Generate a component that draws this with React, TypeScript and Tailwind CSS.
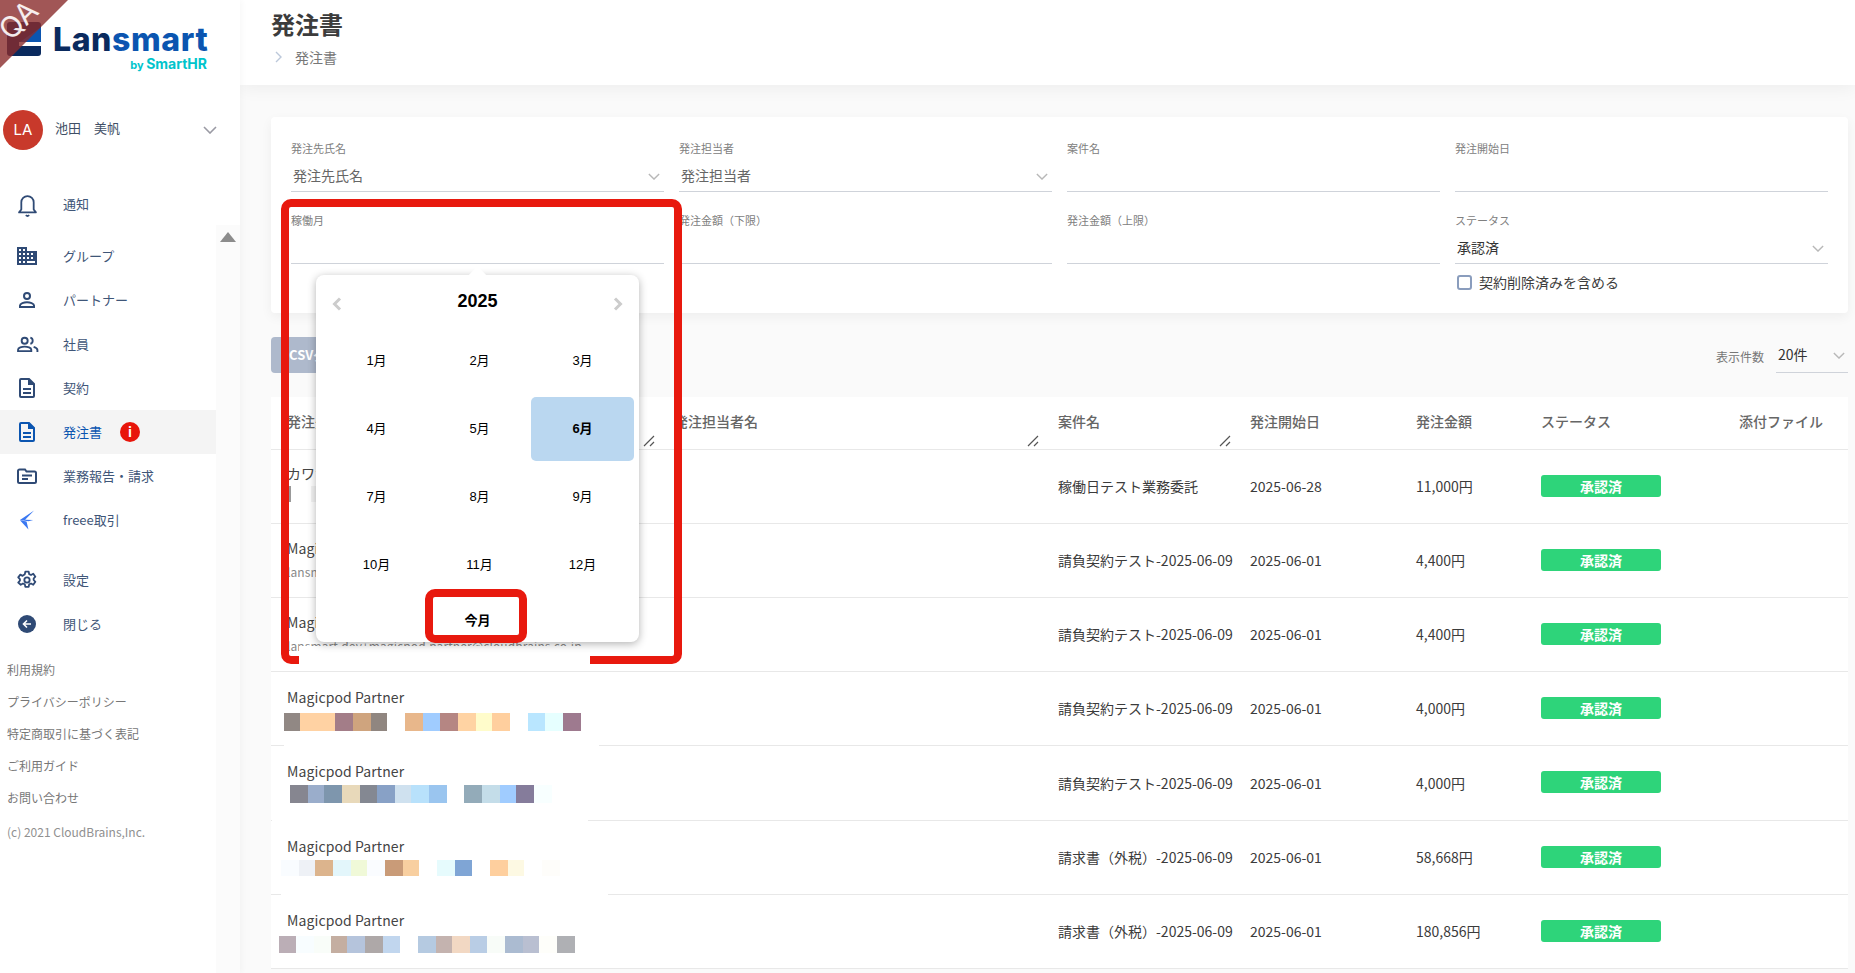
import React from "react";

const JP = "font-['Noto_Sans_CJK_JP','Noto_Sans',sans-serif]";

function Chevron({ className = "" }: { className?: string }) {
  return (
    <svg viewBox="0 0 14 8" className={className} fill="none" stroke="currentColor" strokeWidth="1.6">
      <path d="M1 1l6 6 6-6" />
    </svg>
  );
}

function Bell() {
  return (
    <svg viewBox="0 0 24 24" className="w-[27px] h-[27px]" fill="none" stroke="#2f4a75" strokeWidth="1.6">
      <path d="M6.500 16.500V10a5.500 5.500 0 0 1 11 0v6.500l2 2.500h-15z" strokeLinejoin="round" />
      <path d="M10.500 21.500c.8.800 2.200.800 3 0" />
    </svg>
  );
}
function Building() {
  return (
    <svg viewBox="0 0 20 18" className="w-[20px] h-[18px]" fill="#2f4a75">
      <path d="M0 0h10v4h10v14H0zM2 2v2h2V2zm4 0v2h2V2zM2 6v2h2V6zm4 0v2h2V6zm4 0v2h2V6zm4 0v2h2V6zM2 10v2h2v-2zm4 0v2h2v-2zm4 0v2h2v-2zm4 0v2h2v-2zM2 14v2h2v-2zm4 0v2h2v-2zm4 0v2h8v-2z" fillRule="evenodd" />
    </svg>
  );
}
function Person() {
  return (
    <svg viewBox="0 0 18 18" className="w-[18px] h-[18px]" fill="none" stroke="#2f4a75" strokeWidth="2">
      <circle cx="9" cy="5" r="3" />
      <path d="M2 16v-1.500c0-2 4-3.200 7-3.200s7 1.200 7 3.200V16z" />
    </svg>
  );
}
function People() {
  return (
    <svg viewBox="0 0 24 18" className="w-[23px] h-[17px]" fill="none" stroke="#2f4a75" strokeWidth="2">
      <circle cx="9" cy="5" r="3.200" />
      <path d="M2 16v-1.500c0-2 4-3.200 7-3.200s7 1.200 7 3.200V16z" />
      <path d="M15 1.800a3.300 3.300 0 0 1 0 6.400M18.500 11.500c2 .7 4 1.700 4 3.300V17" />
    </svg>
  );
}
function Doc({ color = "#2f4a75" }: { color?: string }) {
  return (
    <svg viewBox="0 0 16 20" className="w-[16px] h-[20px]" fill="none" stroke={color} strokeWidth="2">
      <path d="M1 2a1 1 0 0 1 1-1h8l5 5v12a1 1 0 0 1-1 1H2a1 1 0 0 1-1-1z" />
      <path d="M10 1v5h5" fill={color} />
      <path d="M4 11h8M4 15h8" />
    </svg>
  );
}
function Report() {
  return (
    <svg viewBox="0 0 20 16" className="w-[20px] h-[16px]" fill="none" stroke="#2f4a75" strokeWidth="2">
      <path d="M1 3a1.500 1.500 0 0 1 1.500-1.500H8l1.500 2h8A1.500 1.500 0 0 1 19 5v8.500A1.500 1.500 0 0 1 17.500 15h-15A1.500 1.500 0 0 1 1 13.500z" />
      <path d="M5 7.500h10M5 11h6" />
    </svg>
  );
}
function Freee() {
  return (
    <svg viewBox="0 0 18 20" className="w-[17px] h-[20px]" fill="#3a78f2">
      <path d="M16 0 1 10l9 1.200L15 10l-8.500-.2zM1 10.200l9 9.800-2-8.500z" />
    </svg>
  );
}
function Gear() {
  return (
    <svg viewBox="0 0 24 24" className="w-[20px] h-[20px]" fill="none" stroke="#2f4a75" strokeWidth="2.200" strokeLinejoin="round">
      <circle cx="12" cy="12" r="3.200" />
      <path d="M10 2h4l.6 3 2.200 1 2.700-1.500 2.500 3.500-2 2.200v1.800l2 2.200-2.500 3.500-2.700-1.500-2.200 1-.6 3h-4l-.6-3-2.200-1-2.700 1.500L1.500 15l2-2.200V11l-2-2.200L4 5.500 6.700 7l2.700-2z" />
    </svg>
  );
}
function Back() {
  return (
    <svg viewBox="0 0 18 18" className="w-[18px] h-[18px]">
      <circle cx="9" cy="9" r="9" fill="#2f4a75" />
      <path d="M9 5.500 5.500 9 9 12.500M5.500 9H13" fill="none" stroke="#fff" strokeWidth="1.600" />
    </svg>
  );
}

function NavItem({ icon, label, active, badge }: { icon: React.ReactNode; label: string; active?: boolean; badge?: boolean }) {
  return (
    <div className={`flex items-center h-[44px] w-[216px] ${active ? "bg-[#f4f4f4]" : ""}`}>
      <div className="w-[54px] flex justify-center shrink-0">{icon}</div>
      <span className={`ml-[9px] text-[13px] ${active ? "text-[#0b55b0]" : "text-[#3f5678]"}`}>{label}</span>
      {badge && (
        <span className="ml-[18px] w-[20px] h-[20px] rounded-full bg-[#e8150a] text-white text-[13px] font-bold flex items-center justify-center">i</span>
      )}
    </div>
  );
}

function Sidebar() {
  return (
    <aside className="relative w-[240px] shrink-0 bg-white shadow-[2px_0_6px_rgba(0,0,0,0.03)] z-10">
      <div className="h-[100px] relative">
        <svg viewBox="0 0 34 34" className="absolute left-[7px] top-[22px] w-[34px] h-[34px]">
          <rect width="34" height="34" rx="3" fill="#0a2a5e" />
          <path d="M34 5v15H13z" fill="#0b55b0" />
          <rect x="12" y="20" width="22" height="4" fill="#fff" />
        </svg>
        <div className="absolute left-[53px] top-[18px] text-[32px] font-extrabold leading-[44px] tracking-[0.6px] font-['Inter',sans-serif] text-[#0b55b0]">
          <span className="text-[#0a2a5e]">Lan</span>smart
        </div>
        <div className="absolute right-[33px] top-[55px] text-[13px] font-bold leading-[18px] font-['Inter',sans-serif] text-[#00c4cc]">
          <span className="text-[11px]">by </span><span className="text-[14px]">SmartHR</span>
        </div>
      </div>
      <div className="flex items-center h-[60px] pl-[3px] pr-[23px]">
        <div className="w-[40px] h-[40px] rounded-full bg-[#c8392b] text-white text-[15px] flex items-center justify-center font-['Inter',sans-serif]">LA</div>
        <span className="ml-[12px] mb-[4px] text-[13px] text-[#3f4f66] whitespace-pre">池田　美帆</span>
        <Chevron className="ml-auto w-[14px] h-[8px] text-[#9a9aa4]" />
      </div>
      <div className="mt-[22px]">
        <NavItem icon={<Bell />} label="通知" />
        <div className="h-[8px]" />
        <NavItem icon={<Building />} label="グループ" />
        <NavItem icon={<Person />} label="パートナー" />
        <NavItem icon={<People />} label="社員" />
        <NavItem icon={<Doc />} label="契約" />
        <NavItem icon={<Doc color="#0b55b0" />} label="発注書" active badge />
        <NavItem icon={<Report />} label="業務報告・請求" />
        <NavItem icon={<Freee />} label="freee取引" />
        <div className="h-[16px]" />
        <NavItem icon={<Gear />} label="設定" />
        <NavItem icon={<Back />} label="閉じる" />
      </div>
      <div className="pl-[7px] mt-[8px] text-[12px] text-[#777] leading-[32px]">
        <div>利用規約</div>
        <div>プライバシーポリシー</div>
        <div>特定商取引に基づく表記</div>
        <div>ご利用ガイド</div>
        <div>お問い合わせ</div>
        <div className="text-[#909090] mt-[2px]">(c) 2021 CloudBrains,Inc.</div>
      </div>
      {/* scrollbar strip */}
      <div className="absolute left-[216px] top-[225px] bottom-0 w-[24px] bg-[#fbfbfb]">
        <div className="mx-auto mt-[7px] w-0 h-0 border-x-[8px] border-x-transparent border-b-[10px] border-b-[#8c8c8c]" />
      </div>
      {/* QA ribbon */}
      <div className="absolute left-0 top-0 w-[68px] h-[68px] bg-[#8a2c2c]/80 [clip-path:polygon(0_0,100%_0,0_100%)] overflow-hidden">
        <span className="absolute left-[-2px] top-[4px] text-white/90 text-[29px] leading-[32px] -rotate-45 font-['Inter',sans-serif]">QA</span>
      </div>
    </aside>
  );
}

function Field({ label, value, placeholder, select }: { label: string; value?: string; placeholder?: boolean; select?: boolean }) {
  return (
    <div className="h-[51px] flex flex-col border-b border-[#cfd3da] relative">
      <div className="text-[11px] leading-[14px] text-[#808080]">{label}</div>
      <div className={`flex-1 flex items-center pl-[2px] pt-[5px] text-[14px] ${placeholder ? "text-[#666]" : "text-[#333]"}`}>{value}</div>
      {select && <Chevron className="absolute right-[4px] bottom-[11px] w-[12px] h-[7px] text-[#b8b8b8]" />}
    </div>
  );
}

function Filters() {
  return (
    <section className="ml-[31px] mr-[7px] mt-[32px] h-[196px] bg-white rounded-[4px] shadow-[0_4px_12px_rgba(0,0,0,0.05)] px-[20px] pt-[24px]">
      <div className="grid grid-cols-4 gap-x-[15px] gap-y-[21px]">
        <Field label="発注先氏名" value="発注先氏名" placeholder select />
        <Field label="発注担当者" value="発注担当者" placeholder select />
        <Field label="案件名" />
        <Field label="発注開始日" />
        <Field label="稼働月" />
        <Field label="発注金額（下限）" />
        <Field label="発注金額（上限）" />
        <div>
          <Field label="ステータス" value="承認済" select />
          <label className="mt-[9px] ml-[2px] flex items-center gap-[7px] text-[14px] leading-[18px] text-[#3d3d3d]">
            <span className="w-[15px] h-[15px] rounded-[3px] border-2 border-[#8a9dbd] bg-white" />
            契約削除済みを含める
          </label>
        </div>
      </div>
    </section>
  );
}

function Toolbar() {
  return (
    <div className="ml-[31px] mr-[7px] mt-[24px] h-[60px] flex items-start justify-between">
      <div className="h-[36px] w-[190px] rounded-[4px] bg-[#aeb9cc] text-white text-[13px] font-bold flex items-center pl-[18px] whitespace-nowrap">
        CSVダウンロード
      </div>
      <div className="flex items-start">
        <span className="mt-[12px] text-[12px] leading-[16px] text-[#777]">表示件数</span>
        <div className="ml-[12px] w-[72px] h-[36px] border-b border-[#cfd3da] relative text-[14px] leading-[34px] text-[#333] pl-[2px]">
          20件
          <Chevron className="absolute right-[3px] top-[15px] w-[12px] h-[7px] text-[#b8b8b8]" />
        </div>
      </div>
    </div>
  );
}

const COLS = "grid grid-cols-[387px_384px_192px_166px_125px_198px_125px]";

function Handle() {
  return (
    <svg viewBox="0 0 12 12" className="absolute right-[3px] bottom-[2px] w-[12px] h-[12px]" stroke="#555" strokeWidth="1.200">
      <path d="M1 11 11 1M7 11l4-4" />
    </svg>
  );
}

function Head() {
  const items: [string, boolean][] = [
    ["発注先氏名", true],
    ["発注担当者名", true],
    ["案件名", true],
    ["発注開始日", false],
    ["発注金額", false],
    ["ステータス", false],
    ["添付ファイル", false],
  ];
  return (
    <div className={`${COLS} h-[53px] border-b border-[#e8e8e8]`}>
      {items.map(([t, h]) => (
        <div key={t} className="relative pl-[16px] pt-[14px] text-[14px] leading-[20px] font-medium text-[#666]">
          {t}
          {h && <Handle />}
        </div>
      ))}
    </div>
  );
}

type Block = [number, string];
type Row = {
  name: string;
  sub?: string;
  blocks?: Block[];
  blockLeft?: number;
  blockH?: number;
  gap?: number;
  patch?: [number, number];
  tall?: boolean;
  top: number;
  project: string;
  date: string;
  amount: string;
};

const W = "#ffffff";
const rows: Row[] = [
  { name: "カワサキ", top: 12, project: "稼働日テスト業務委託", date: "2025-06-28", amount: "11,000円", blocks: [[2, "#999999"], [20, W], [7, "#f3f3f3"], [6, "#e9d3b0"]], blockLeft: 18, blockH: 16, gap: 2 },
  { name: "Magicpod Partner", sub: "lansmart.dev+magicpod.partner@cloudbrains.co.jp", top: 13, project: "請負契約テスト-2025-06-09", date: "2025-06-01", amount: "4,400円" },
  { name: "Magicpod Partner", sub: "lansmart.dev+magicpod.partner@cloudbrains.co.jp", top: 13, project: "請負契約テスト-2025-06-09", date: "2025-06-01", amount: "4,400円" },
  {
    name: "Magicpod Partner", top: 14, project: "請負契約テスト-2025-06-09", date: "2025-06-01", amount: "4,000円", blockLeft: 13, blockH: 18, gap: 5, patch: [13, 315],
    blocks: [[16, "#918884"], [35, "#ffd2a3"], [18, "#a37d88"], [18, "#cfa47e"], [16, "#908680"], [18, W], [18, "#e8b78b"], [17, "#a0ccff"], [18, "#b58683"], [18, "#ffd3a3"], [16, "#fffccb"], [18, "#ffcf9e"], [18, W], [17, "#b9e6ff"], [18, "#e6ffff"], [18, "#9e7a8f"]],
  },
  {
    name: "Magicpod Partner", top: 14, tall: true, project: "請負契約テスト-2025-06-09", date: "2025-06-01", amount: "4,000円", blockLeft: 19, blockH: 18, gap: 3, patch: [1, 316],
    blocks: [[18, "#868690"], [16, "#9aadcb"], [18, "#7e96ad"], [18, "#e8d9ba"], [17, "#848892"], [18, "#88a1c6"], [16, "#cfe1ef"], [18, "#b8e1fb"], [18, "#9ac5ef"], [17, W], [18, "#93abb9"], [18, "#c4dde9"], [16, "#a0ccff"], [18, "#857c9b"], [18, "#f8ffff"]],
  },
  {
    name: "Magicpod Partner", top: 14, project: "請求書（外税）-2025-06-09", date: "2025-06-01", amount: "58,668円", blockLeft: 10, blockH: 16, gap: 3, patch: [10, 327],
    blocks: [[18, "#f9fcff"], [16, "#eef1f6"], [18, "#dcb48d"], [18, "#e3f6fb"], [16, "#f0f9d8"], [18, "#fafcff"], [18, "#c99b78"], [16, "#f8cfa0"], [18, W], [18, "#e6fbfd"], [17, "#7fa5d5"], [18, W], [18, "#fecf9e"], [16, "#fdf9e3"], [18, W], [18, "#fefdfa"]],
  },
  {
    name: "Magicpod Partner", top: 14, project: "請求書（外税）-2025-06-09", date: "2025-06-01", amount: "180,856円", blockLeft: 8, blockH: 17, gap: 5,
    blocks: [[17, "#bbaeb6"], [18, "#f8fdff"], [17, "#f9fdf9"], [16, "#c4aea1"], [18, "#b5c4dc"], [18, "#aea8a8"], [17, "#c1d6ee"], [18, W], [18, "#b5cae1"], [16, "#c4b3af"], [18, "#f2d8c3"], [17, "#b9cde5"], [18, "#f8fcf8"], [18, "#abbbd1"], [16, "#b9bfd1"], [18, "#fefefa"], [18, "#afb0b4"]],
  },
];

function TableRow({ r }: { r: Row }) {
  return (
    <div className={`${COLS} ${r.tall ? "h-[75px]" : "h-[74px]"} border-b border-[#e8e8e8] text-[14px] text-[#3b3b3b]`}>
      <div className="relative pl-[16px]" style={{ paddingTop: r.top }}>
        <div className="text-[14px] leading-[22px] tracking-[0.1px] text-[#444] whitespace-nowrap">{r.name}</div>
        {r.sub && <div className="text-[12px] leading-[14px] mt-[6px] text-[#888] tracking-[0.1px] whitespace-nowrap">{r.sub}</div>}
        {r.blocks && (
          <div className="flex" style={{ marginLeft: (r.blockLeft ?? 16) - 16, marginTop: r.gap, height: r.blockH }}>
            {r.blocks.map(([w, c], i) => (
              <span key={i} className="block shrink-0" style={{ width: w, background: c }} />
            ))}
          </div>
        )}
        {r.patch && <span className="absolute bottom-[-1px] h-[1px] bg-white" style={{ left: r.patch[0], width: r.patch[1] }} />}
      </div>
      <div />
      <div className="pl-[16px] flex items-center whitespace-nowrap overflow-hidden">{r.project}</div>
      <div className="pl-[16px] flex items-center">{r.date}</div>
      <div className="pl-[16px] flex items-center">{r.amount}</div>
      <div className="pl-[16px] flex items-center">
        <span className="-mt-[2px] w-[120px] h-[22px] rounded-[3px] bg-[#2ed47a] text-white text-[14px] font-bold leading-[22px] text-center">承認済</span>
      </div>
      <div />
    </div>
  );
}

function MonthPicker() {
  const months = ["1月", "2月", "3月", "4月", "5月", "6月", "7月", "8月", "9月", "10月", "11月", "12月"];
  return (
    <div className="absolute left-[316px] top-[275px] w-[323px] h-[367px] bg-white rounded-[8px] shadow-[0_2px_8px_rgba(0,0,0,0.3)] font-['Liberation_Sans','Noto_Sans_CJK_JP',sans-serif] text-black z-20">
      <div className="absolute left-[155px] top-[-6px] w-[13px] h-[13px] bg-white rotate-45" />
      <div className="relative h-[54px] flex items-center justify-between px-[16px]">
        <svg viewBox="0 0 10 14" className="w-[10px] h-[14px] mt-[4px]" fill="none" stroke="#cccccc" strokeWidth="3"><path d="M8 1.500 2.500 7 8 12.500" /></svg>
        <span className="text-[18px] font-bold mb-[2px]">2025</span>
        <svg viewBox="0 0 10 14" className="w-[10px] h-[14px] mt-[4px]" fill="none" stroke="#cccccc" strokeWidth="3"><path d="M2 1.500 7.500 7 2 12.500" /></svg>
      </div>
      <div className="grid grid-cols-3 gap-y-[4px] ml-[9px] mr-[5px]">
        {months.map((m) => (
          <div key={m} className={`h-[64px] flex items-center justify-center text-[13px] rounded-[5px] ${m === "6月" ? "bg-[#bad7f0] font-bold" : ""}`}>
            {m}
          </div>
        ))}
      </div>
      <div className="text-center text-[13px] font-bold leading-[18px] mt-[15px]">今月</div>
    </div>
  );
}

export default function App() {
  return (
    <div className={`relative flex h-screen overflow-hidden bg-[#fafafa] ${JP}`}>
      <Sidebar />
      <main className="flex-1 min-w-0">
        <header className="h-[85px] bg-white shadow-[0_4px_16px_rgba(0,0,0,0.05)] pl-[31px] pt-[6px]">
          <h1 className="text-[24px] leading-[36px] font-bold text-[#3c3c3c]">発注書</h1>
          <div className="flex items-center mt-[5px] text-[14px] leading-[20px] text-[#777]">
            <svg viewBox="0 0 8 12" className="w-[8px] h-[14px] ml-[4px] mr-[12px]" fill="none" stroke="#bcc8da" strokeWidth="1.400"><path d="M1 1l5 5-5 5" /></svg>
            発注書
          </div>
        </header>
        <Filters />
        <Toolbar />
        <section className="ml-[31px] mr-[7px] bg-white">
          <Head />
          {rows.map((r, i) => (
            <TableRow key={i} r={r} />
          ))}
        </section>
      </main>

      <div className="absolute left-[281px] top-[199px] w-[401px] h-[465px] rounded-[10px] border-[8px] border-[#e8190e] z-10" />
      <MonthPicker />
      <div className="absolute left-[299px] top-[646px] w-[291px] h-[19px] bg-white z-[15]" />
      <div className="absolute left-[425px] top-[589px] w-[102px] h-[54px] rounded-[10px] border-[8px] border-[#e8190e] z-30" />
    </div>
  );
}
